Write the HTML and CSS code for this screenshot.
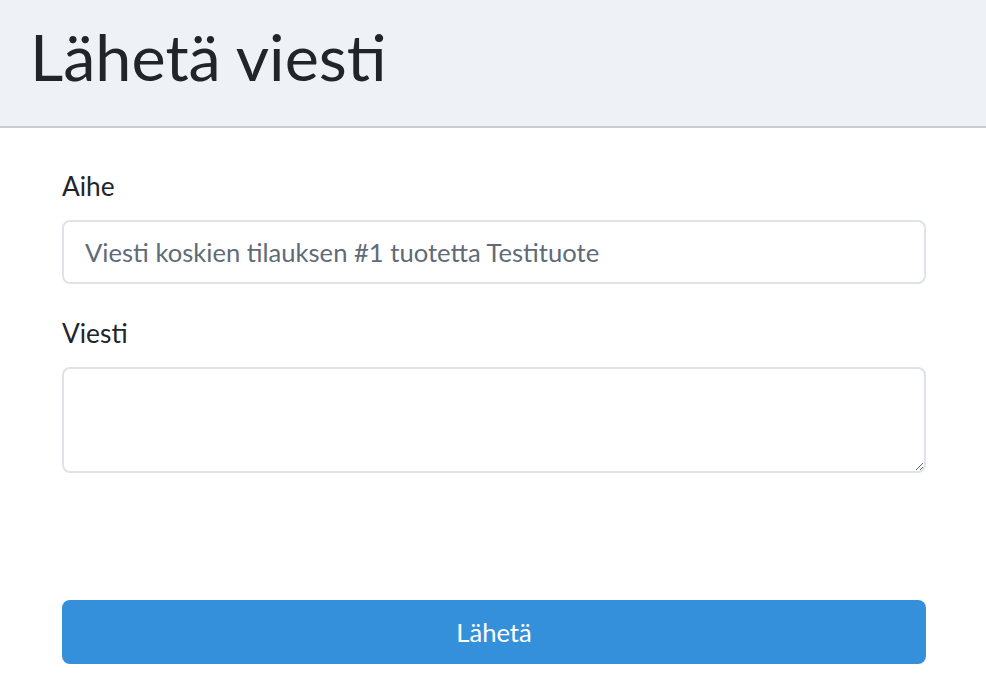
FILE: index.html
```html
<!DOCTYPE html>
<html lang="fi">
<head>
<meta charset="utf-8">
<title>Lähetä viesti</title>
<link rel="stylesheet" href="styles.css">
</head>
<body>
<header class="page-header">
  <h1 class="title">Lähetä viesti</h1>
</header>
<main class="content">
  <form class="form">
    <div class="field">
      <label class="label" for="aihe">Aihe</label>
      <input class="control" id="aihe" type="text" value="Viesti koskien tilauksen #1 tuotetta Testituote">
    </div>
    <div class="field">
      <label class="label" for="viesti">Viesti</label>
      <textarea class="control area" id="viesti"></textarea>
    </div>
    <button class="submit" type="button">Lähetä</button>
  </form>
</main>
</body>
</html>
```
FILE: styles.css
```css
* { box-sizing: border-box; }
html, body { margin: 0; padding: 0; background: #fff; }
body {
  font-family: "Lato", "Noto Sans", sans-serif;
  color: #212529;
}
.page-header {
  background: #eef2f6;
  border-bottom: 2px solid #c9ccd0;
  height: 128px;
  padding: 0 0 0 30px;
  display: flex;
  align-items: center;
}
.title {
  margin: 0;
  font-weight: 400;
  font-size: 64.7px;
  line-height: 1;
  margin-top: -14px;
  color: #212529;
}
.content {
  padding: 40px 60px 0 62px;
}
.form { display: flex; flex-direction: column; }
.field { display: flex; flex-direction: column; margin-bottom: 31px; }
.label {
  font-size: 26.3px;
  line-height: 36px;
  margin-bottom: 16px;
}
.control {
  font-family: inherit;
  font-size: 25.6px;
  color: #5f6b77;
  border: 2px solid #dfe3e7;
  border-radius: 8px;
  padding: 0 21px;
  height: 64px;
  outline: none;
  background: #fff;
}
.area {
  height: 106px;
  padding: 10px 21px;
  resize: vertical;
}
.submit {
  margin-top: 96px;
  height: 64px;
  border: none;
  border-radius: 8px;
  background: #3590dc;
  color: #fff;
  font-family: inherit;
  font-size: 25.6px;
}
```
